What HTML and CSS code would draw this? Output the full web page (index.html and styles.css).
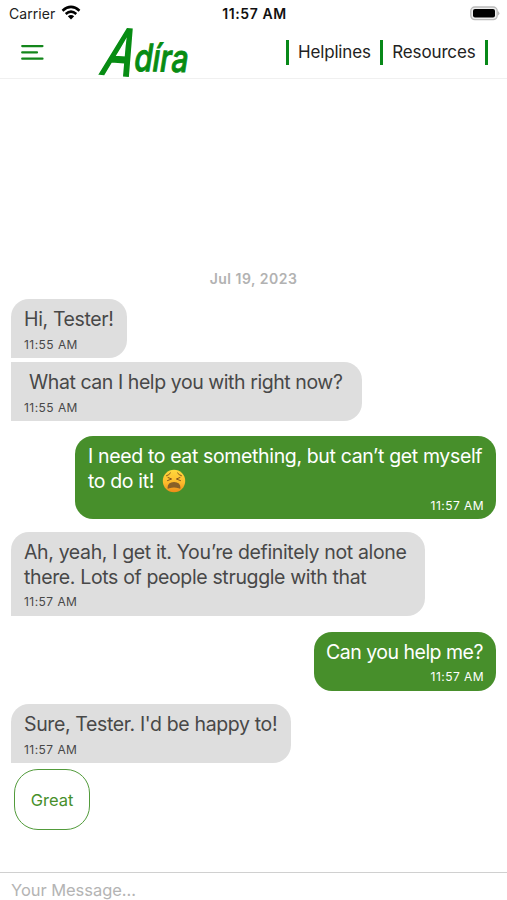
FILE: index.html
```html
<!DOCTYPE html>
<html lang="en">
<head>
<meta charset="utf-8">
<meta name="viewport" content="width=device-width, initial-scale=1">
<title>Adira</title>
<link rel="stylesheet" href="styles.css">
</head>
<body>
<div class="status">
  <div class="carrier"><span>Carrier</span>
    <svg width="20" height="16" viewBox="0 0 20 16" fill="none" stroke="#000" stroke-width="2.5"><path d="M1.5 5.7Q10-1.9 18.500 5.700"/><path d="M4.700 9Q10 4.300 15.300 9"/><path d="M10 14.500L6.800 11.300Q10 8.600 13.200 11.300Z" fill="#000" stroke="none"/></svg>
  </div>
  <time class="clock">11:57 AM</time>
  <svg class="battery" width="31" height="15" viewBox="0 0 31 15"><rect x="1.800" y="1" width="26.400" height="12.600" rx="4" fill="#eee" stroke="#bbb" stroke-width="1.400"/><rect x="4" y="3" width="22" height="8.600" rx="2"/><path d="M29.200 5Q31.500 7.300 29.200 9.600Z" fill="#aaa"/></svg>
</div>
<header class="header">
  <button class="menu" aria-label="Menu"><svg width="23" height="17" viewBox="0 0 23 17" fill="none" stroke="#13861b" stroke-width="2.200" stroke-linecap="round"><path d="M1.200 2.100H21.500M1.200 8.400H16M1.200 14.700H21.500"/></svg></button>
  <h1 class="logo"><span class="cap">A</span><span class="rest">díra</span></h1>
  <nav class="nav"><a>Helplines</a><a>Resources</a></nav>
</header>
<main class="chat">
  <div class="date">Jul 19, 2023</div>
  <div class="bubble bot first hi"><p>Hi, Tester!</p><time>11:55 AM</time></div>
  <div class="bubble bot ask"><p class="indent">What can I help you with right now?</p><time>11:55 AM</time></div>
  <div class="bubble user need"><p>I need to eat something, but can’t get myself<br>to do it! <svg class="emoji" width="24" height="24" viewBox="0 0 24 24"><defs><linearGradient id="face" x2="0" y2="1"><stop stop-color="#ffd83d"/><stop offset=".6" stop-color="#fdb92b"/><stop offset="1" stop-color="#ed8b18"/></linearGradient></defs><circle cx="12" cy="12" r="11.200" fill="url(#face)"/><g fill="none" stroke="#75461b" stroke-linecap="round" stroke-linejoin="round" stroke-width=".9"><path d="M4.500 6.800Q7 6 8.500 4M19.500 6.800Q17 6 15.500 4"/><path d="M6 8.500L9.600 10L5.500 11.600M18 8.500L14.400 10L18.500 11.600"/></g><path d="M5.500 19.300Q5.500 13 12 13T18.500 19.300Q18.300 20.200 16.700 19.300Q12 17.500 7.300 19.300Q5.700 20.200 5.500 19.300Z" fill="#896027"/></svg></p><time>11:57 AM</time></div>
  <div class="bubble bot first alone"><p>Ah, yeah, I get it. You’re definitely not alone<br>there. Lots of people struggle with that</p><time>11:57 AM</time></div>
  <div class="bubble user help"><p>Can you help me?</p><time>11:57 AM</time></div>
  <div class="bubble bot first sure"><p>Sure, Tester. I'd be happy to!</p><time>11:57 AM</time></div>
  <button class="reply">Great</button>
</main>
<footer class="composer">Your Message...</footer>
</body>
</html>
```
FILE: styles.css
```css
* { box-sizing: border-box; }
body { margin: 0; height: 900px; overflow: hidden; display: flex; flex-direction: column; background: #fff; color: #222; font-family: Inter, sans-serif; }
p, h1 { margin: 0; }
button { padding: 0; background: none; font-family: inherit; }
.status { height: 28px; display: grid; grid-template-columns: 1fr auto 1fr; align-items: center; padding: 0 7px 2px 9px; font-size: 14px; }
.carrier { display: flex; align-items: center; gap: 6px; letter-spacing: .05px; }
.clock { font-weight: 600; color: #111; letter-spacing: .6px; }
.battery { justify-self: end; }
.header { height: 51px; display: flex; align-items: center; border-bottom: 1px solid #f0f0f0; padding: 0 19px 0 21px; }
.menu { border: 0; display: flex; margin-top: -1px; }
.logo { width: 90px; height: 50px; margin-left: 58px; display: flex; align-items: baseline; color: #078c13; font-weight: 500; line-height: 50px; white-space: nowrap; }
.cap { font-size: 64px; font-weight: 400; -webkit-text-stroke: 2px #078c13; stroke-linejoin: round; display: block; width: 32px; transform: translateY(-2px) rotate(4deg) skewX(-15deg) scaleX(.7); transform-origin: 0 75%; }
.rest { font-size: 38px; display: block; -webkit-text-stroke: 1px #078c13; transform: translate(-1px, -5px) rotate(1deg) skewX(-8deg) scaleX(.78); transform-origin: 0 75%; }
.nav { margin-left: auto; display: flex; height: 25px; align-items: center; margin-top: -1px; border-right: 3px solid #078818; font-size: 17px; }
.nav a { height: 25px; line-height: 25px; border-left: 3px solid #078818; padding: 0 9.500px 0 9px; letter-spacing: -.15px; }
.chat { flex: 1; display: flex; flex-direction: column; align-items: flex-start; padding: 190px 11px 0; }
.date { align-self: center; height: 20px; line-height: 20px; color: #b2b2b2; font-size: 14px; font-weight: 600; letter-spacing: .5px; margin-bottom: 10px; }
.bubble { flex: none; min-height: 59px; padding: 8px 13px 0; border-radius: 0 18px 18px 0; white-space: nowrap; font-size: 19.500px; line-height: 24.500px; letter-spacing: -.36px; }
.bot { background: #dedede; color: #484848; }
.first { border-top-left-radius: 18px; }
.user { align-self: flex-end; border-radius: 18px; background: #478f2b; color: #fff; }
.bubble time { display: block; font-size: 12px; line-height: 16px; letter-spacing: .45px; margin-top: 4.500px; }
.bot time { padding-top: .5px; }
.user time { text-align: right; margin-right: -1px; }
.hi { width: 116px; margin-bottom: 4px; }
.ask { width: 351px; letter-spacing: -.43px; }
.indent { padding-left: 5px; }
.need { width: 421px; height: 83px; margin-top: 15px; }
.need p { height: 49px; }
.emoji { vertical-align: -1px; margin: -4px 0 -4px 3px; }
.alone { width: 414px; height: 84px; margin-top: 13px; }
.help { width: 182px; margin-top: 16px; padding-left: 12px; letter-spacing: -.5px; }
.sure { width: 280px; margin-top: 13px; }
.reply { width: 76px; height: 61px; flex: none; margin: 6px 0 0 3px; border: 1.500px solid #529b3b; border-radius: 24px; color: #478f2b; font-size: 16.500px; }
.composer { height: 28px; border-top: 1px solid #d0d0d0; padding: 7px 11px 0; color: #b4b4b4; font-size: 16.500px; line-height: 20px; letter-spacing: -.05px; }
```
